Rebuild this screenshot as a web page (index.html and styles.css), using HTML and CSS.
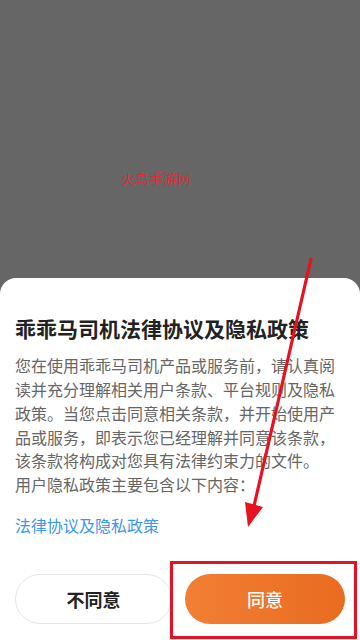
FILE: index.html
```html
<!DOCTYPE html>
<html lang="zh">
<head>
<meta charset="utf-8">
<link rel="stylesheet" href="styles.css">
</head>
<body>
<div class="screen">
  <div class="backdrop">
    <div class="watermark">火鸟手游网</div>
  </div>
  <div class="sheet">
    <h1 class="title">乖乖马司机法律协议及隐私政策</h1>
    <p class="text">您在使用乖乖马司机产品或服务前，请认真阅读并充分理解相关用户条款、平台规则及隐私政策。当您点击同意相关条款，并开始使用产品或服务，即表示您已经理解并同意该条款，该条款将构成对您具有法律约束力的文件。<br>用户隐私政策主要包含以下内容：</p>
    <a class="link">法律协议及隐私政策</a>
    <div class="actions">
      <button class="btn btn-ghost">不同意</button>
      <button class="btn btn-primary">同意</button>
    </div>
  </div>
  <svg class="annot" width="360" height="640" viewBox="0 0 360 640">
    <line x1="311" y1="259" x2="254" y2="506" stroke="#e8111f" stroke-width="3.2" stroke-linecap="round"/>
    <polygon points="245,502 263,507 248,527" fill="#e8111f"/>
    <rect x="171.5" y="562.5" width="184" height="75" fill="none" stroke="#e8111f" stroke-width="3"/>
  </svg>
</div>
</body>
</html>
```
FILE: styles.css
```css
* { box-sizing: border-box; }
html, body { margin: 0; padding: 0; }
body {
  width: 360px;
  height: 640px;
  overflow: hidden;
  font-family: "Noto Sans CJK SC", "Noto Sans", sans-serif;
  background: #666666;
}
.screen {
  position: relative;
  width: 360px;
  height: 640px;
  display: flex;
  flex-direction: column;
}
.backdrop {
  flex: 1;
  background: #666666;
  padding-top: 168px;
  padding-left: 121px;
}
.watermark {
  color: #d4303c;
  font-size: 14px;
  line-height: 20px;
  letter-spacing: 0;
}
.sheet {
  background: #ffffff;
  border-radius: 16px 16px 0 0;
  padding: 36px 15px 16px;
  display: flex;
  flex-direction: column;
}
.title {
  margin: 0;
  font-size: 21px;
  line-height: 29px;
  font-weight: 700;
  color: #222222;
}
.text {
  margin: 11px 0 0;
  font-size: 16px;
  line-height: 23.8px;
  color: #666666;
}
.link {
  margin-top: 16px;
  font-size: 16px;
  line-height: 24px;
  color: #3b97f2;
}
.actions {
  margin-top: 37px;
  display: grid;
  grid-template-columns: 157px 160px;
  justify-content: space-between;
}
.btn {
  height: 50px;
  border-radius: 25px;
  font-family: inherit;
  font-size: 18px;
  padding: 0;
}
.btn-ghost {
  background: #ffffff;
  border: 1px solid #e6e6e6;
  color: #222222;
  font-weight: 700;
}
.btn-primary {
  border: none;
  color: #ffffff;
  font-weight: 500;
  background: linear-gradient(90deg, #f27f35, #e96b20);
}
.annot {
  position: absolute;
  left: 0;
  top: 0;
  pointer-events: none;
}
```
